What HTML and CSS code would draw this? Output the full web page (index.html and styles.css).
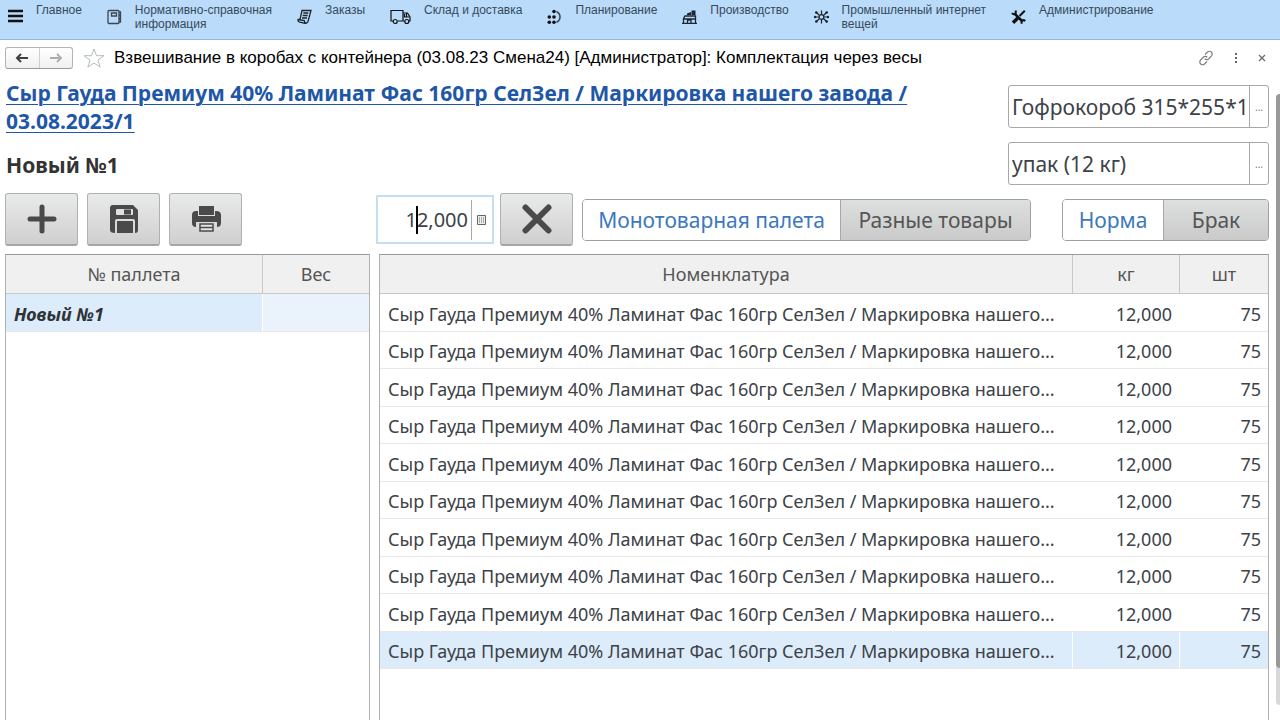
FILE: index.html
```html
<!DOCTYPE html>
<html lang="ru">
<head>
<meta charset="utf-8">
<title>Комплектация через весы</title>
<link rel="stylesheet" href="styles.css">
</head>
<body>
<nav class="menu">
  <a class="menu-item" href="#"><svg width="15" height="14" viewBox="0 0 15 14"><path d="M0 2h15M0 7h15M0 12h15" stroke="#111" stroke-width="2.6"/></svg><span>Главное</span></a>
  <a class="menu-item" href="#"><svg width="15" height="16" viewBox="0 0 15 16" fill="none" stroke="#3a4653" stroke-width="1.3"><rect x="1" y="1.5" width="11" height="13" rx="1"/><path d="M4.500 4h5v3h-5zM12 3h1.500v3H12M12 6.500h1.500v3H12M12 10h1.500v3H12"/></svg><span>Нормативно-справочная<br>информация</span></a>
  <a class="menu-item" href="#"><svg width="15" height="16" viewBox="0 0 15 16" fill="none" stroke="#1c242c" stroke-width="1.3"><path d="M5 1.500h9L11 12.500q-1 2-3 1.800l-6-1.500q-1.500-.8-.8-2.500H3zM1.200 10.500l6 1q.3 2 1.500 2.500"/><path d="M6.300 4h5M5.700 6.500h5M5 9h5" stroke-width="1.500"/></svg><span>Заказы</span></a>
  <a class="menu-item" href="#"><svg width="21" height="16" viewBox="0 0 21 16" fill="none" stroke="#111" stroke-width="1.2"><path d="M3 12H1V1.500h12V12H7.500M13 4h4.500l2.500 4v4h-1M13 12h1.500M14.500 5v3H19M16.500 4v4"/><circle cx="5.200" cy="12.500" r="2"/><circle cx="16.800" cy="12.500" r="2"/></svg><span>Склад и доставка</span></a>
  <a class="menu-item" href="#"><svg width="15" height="16" viewBox="0 0 15 16" fill="#111"><circle cx="7" cy="2.500" r="1.800"/><circle cx="2.300" cy="8" r="1.800"/><circle cx="7" cy="8" r="1.800"/><circle cx="2.300" cy="13.300" r="1.800"/><circle cx="7" cy="13.300" r="1.800"/><path d="M9.500 2.500q3.500 1.800 3.500 5.500t-3.500 5.300" fill="none" stroke="#34465a" stroke-width="1.500"/></svg><span>Планирование</span></a>
  <a class="menu-item" href="#"><svg width="15" height="16" viewBox="0 0 15 16" fill="none" stroke="#1c2630" stroke-width="1.300"><path d="M1.500 14V9.500L3 7h10.500v7M1.500 10h12M5.500 14v-3h3.500v3M0 14.300h15"/><path d="M5 4.500l4-1.500v3H5zM9.500 1.500h4V6h-4z" fill="#1c2630" stroke="none"/></svg><span>Производство</span></a>
  <a class="menu-item" href="#"><svg width="15" height="16" viewBox="0 0 15 16" fill="#18222c" stroke="#18222c" stroke-width="1.200"><path d="M7.500 1.500v4M7.500 10.500v4M1 8h4M10 8h4M2.500 3.500l3 3M12.500 3.500l-3 3M2.500 12.500l3-3M12.500 12.500l-3-3"/><circle cx="7.500" cy="8" r="2.300" fill="none"/><circle cx="2.300" cy="3.500" r=".7"/><circle cx="12.700" cy="3.500" r=".7"/><circle cx="2.300" cy="12.500" r=".7"/><circle cx="12.700" cy="12.500" r=".7"/><circle cx="1" cy="8" r=".6"/><circle cx="14" cy="8" r=".6"/></svg><span>Промышленный интернет<br>вещей</span></a>
  <a class="menu-item" href="#"><svg width="15" height="16" viewBox="0 0 15 16" fill="none" stroke="#111"><path d="M3.500 4.500l8 8" stroke-width="2.600"/><path d="M1 4q1.200 1.800 2.800 1T4.500 1.500M14.200 12q-1.500-1.500-2.800-.5t-.6 3.300" stroke-width="2"/><path d="M13.800 1.800L8.500 7" stroke-width="2"/><path d="M7 8.800l-5 5" stroke-width="3.400"/></svg><span>Администрирование</span></a>
</nav>

<header class="titlebar">
  <div class="history">
    <button aria-label="Назад"><svg width="14" height="10" viewBox="0 0 14 10"><path d="M13 5H2M6 1L2 5l4 4" fill="none" stroke="#404040" stroke-width="2"/></svg></button>
    <button aria-label="Вперёд"><svg width="14" height="10" viewBox="0 0 14 10"><path d="M1 5h11M8 1l4 4-4 4" fill="none" stroke="#acacac" stroke-width="1.800"/></svg></button>
  </div>
  <button class="plain star" aria-label="В избранное"><svg width="22" height="20" viewBox="0 0 22 20"><path d="M11 1l2.500 6.700H21l-6 4.400 2.200 7L11 15l-6.200 4.100 2.200-7-6-4.400h7.500z" fill="none" stroke="#b4bac0"/></svg></button>
  <h1>Взвешивание в коробах с контейнера (03.08.23 Смена24) [Администратор]: Комплектация через весы</h1>
  <div class="window-tools">
    <button class="plain" aria-label="Ссылка"><svg width="16" height="16" viewBox="0 0 16 16" fill="none" stroke="#7c7c7c" stroke-width="1.200"><path d="M7 4.500l2.500-2.500q2-1.500 3.800 0 1.700 2 .2 3.800L10.500 9Q8.500 10.500 6.700 8.800M9 11.500L6.500 14q-2 1.500-3.800 0-1.700-2-.2-3.800L5.500 7Q7.500 5.500 9.300 7.200"/></svg></button>
    <button class="plain" aria-label="Ещё"><svg width="4" height="12" viewBox="0 0 4 12" fill="#666"><path d="M1 1h2v2H1zM1 5h2v2H1zM1 9h2v2H1z"/></svg></button>
    <button class="plain" aria-label="Закрыть"><svg width="8" height="8" viewBox="0 0 8 8"><path d="M1 1l6 6M7 1L1 7" stroke="#666" stroke-width="1.200"/></svg></button>
  </div>
</header>

<main class="content">
  <section class="summary">
    <div class="product">
      <a href="#">Сыр Гауда Премиум 40% Ламинат Фас 160гр СелЗел / Маркировка нашего завода / 03.08.2023/1</a>
      <h2>Новый №1</h2>
    </div>
    <div class="packing">
      <div class="picker"><input aria-label="Короб" value="Гофрокороб 315*255*100"><button aria-label="Выбрать короб">...</button></div>
      <div class="picker"><input aria-label="Упаковка" value="упак (12 кг)"><button aria-label="Выбрать упаковку">...</button></div>
    </div>
  </section>

  <section class="toolbar">
    <div class="actions">
      <button class="tool" aria-label="Добавить"><svg width="30" height="30" viewBox="0 0 30 30"><path d="M15 3v24M3 15h24" stroke="#4a4a4a" stroke-width="5" stroke-linecap="round"/></svg></button>
      <button class="tool" aria-label="Сохранить"><svg width="30" height="30" viewBox="0 0 30 30"><path d="M4 1h20l5 5v20q0 3-3 3V17q0-2-2-2H8q-2 0-2 2v12q-5 0-5-3V4q0-3 3-3z" fill="#4a4a4a"/><rect x="7" y="5" width="17" height="6" rx="1" fill="#e0e0e0"/><path d="M15 5.500h7v5h-7zM8 17h16v12H8z" fill="#4a4a4a"/></svg></button>
      <button class="tool" aria-label="Печать"><svg width="30" height="30" viewBox="0 0 30 30"><path d="M8 2h15v9H8zM5 7h2v5h17V7h1q5 0 5 4v8q0 4-4 4v-5H5v5q-4 0-4-4v-8q0-4 4-4z" fill="#4a4a4a"/><path d="M9 20h13v7H9zM9 23.500h13" fill="#e5e5e5" stroke="#4a4a4a" stroke-width="1.500"/></svg></button>
    </div>
    <div class="weigh">
      <div class="weight"><input aria-label="Вес" value="12,000"><span class="caret"></span><button aria-label="Калькулятор"><svg width="9" height="10" viewBox="0 0 9 10"><path d="M.5.500h8v9h-8z" fill="#eee" stroke="#666"/><path d="M2 3h5M2 5h5M2 7h5" stroke="#666" stroke-dasharray="1 1"/></svg></button></div>
      <button class="tool" aria-label="Очистить"><svg width="30" height="30" viewBox="0 0 30 30"><path d="M3.500 3.500l23 23M26.500 3.500l-23 23" stroke="#4a4a4a" stroke-width="6" stroke-linecap="round"/></svg></button>
      <div class="switch pallet-kind"><button class="on">Монотоварная палета</button><button>Разные товары</button></div>
      <div class="switch quality"><button class="on">Норма</button><button>Брак</button></div>
    </div>
  </section>

  <section class="tables">
    <div class="pane pallets">
      <table>
        <colgroup><col><col class="col-weight"></colgroup>
        <thead><tr><th>№ паллета</th><th>Вес</th></tr></thead>
        <tbody><tr class="selected"><td>Новый №1</td><td></td></tr></tbody>
      </table>
    </div>
    <div class="pane goods">
      <table>
        <colgroup><col><col class="col-kg"><col class="col-pcs"></colgroup>
        <thead><tr><th>Номенклатура</th><th>кг</th><th>шт</th></tr></thead>
        <tbody>
          <tr><td>Сыр Гауда Премиум 40% Ламинат Фас 160гр СелЗел / Маркировка нашего...</td><td>12,000</td><td>75</td></tr>
          <tr><td>Сыр Гауда Премиум 40% Ламинат Фас 160гр СелЗел / Маркировка нашего...</td><td>12,000</td><td>75</td></tr>
          <tr><td>Сыр Гауда Премиум 40% Ламинат Фас 160гр СелЗел / Маркировка нашего...</td><td>12,000</td><td>75</td></tr>
          <tr><td>Сыр Гауда Премиум 40% Ламинат Фас 160гр СелЗел / Маркировка нашего...</td><td>12,000</td><td>75</td></tr>
          <tr><td>Сыр Гауда Премиум 40% Ламинат Фас 160гр СелЗел / Маркировка нашего...</td><td>12,000</td><td>75</td></tr>
          <tr><td>Сыр Гауда Премиум 40% Ламинат Фас 160гр СелЗел / Маркировка нашего...</td><td>12,000</td><td>75</td></tr>
          <tr><td>Сыр Гауда Премиум 40% Ламинат Фас 160гр СелЗел / Маркировка нашего...</td><td>12,000</td><td>75</td></tr>
          <tr><td>Сыр Гауда Премиум 40% Ламинат Фас 160гр СелЗел / Маркировка нашего...</td><td>12,000</td><td>75</td></tr>
          <tr><td>Сыр Гауда Премиум 40% Ламинат Фас 160гр СелЗел / Маркировка нашего...</td><td>12,000</td><td>75</td></tr>
          <tr class="selected"><td>Сыр Гауда Премиум 40% Ламинат Фас 160гр СелЗел / Маркировка нашего...</td><td>12,000</td><td>75</td></tr>
        </tbody>
      </table>
    </div>
  </section>
  <div class="scrollbar"><div class="thumb"></div></div>
</main>
</body>
</html>
```
FILE: styles.css
```css
* { box-sizing: border-box; }

body {
  margin: 0;
  height: 100vh;
  display: flex;
  flex-direction: column;
  overflow: hidden;
  background: #fff;
  color: #3c4248;
  font-family: "Noto Sans", "Open Sans", sans-serif;
  font-size: 18px;
}

button, input { font: inherit; color: inherit; margin: 0; }
button { padding: 0; display: flex; align-items: center; justify-content: center; }
svg { flex: none; display: block; }

.menu {
  flex: none;
  display: flex;
  gap: 25px;
  height: 40px;
  padding: 3px 8px 0;
  background: #badbf9;
  border-bottom: 1px solid #93b8d8;
  font-family: "Liberation Sans", Arial, sans-serif;
  font-size: 12px;
  line-height: 14px;
}
.menu-item { display: flex; gap: 13px; color: #36495c; text-decoration: none; white-space: nowrap; }
.menu-item svg { margin-top: 6px; }

.titlebar {
  flex: none;
  display: flex;
  align-items: center;
  height: 36px;
  padding: 0 14px 0 5px;
  font-family: "Liberation Sans", Arial, sans-serif;
  color: #000;
}
.titlebar h1 { flex: 1; margin: 0 0 0 9px; font-size: 17px; font-weight: 400; white-space: nowrap; }
.history {
  display: flex;
  width: 68px;
  height: 22px;
  border: 1px solid #b4b4b4;
  border-bottom-color: #999;
  border-radius: 3px;
  background: linear-gradient(#fff, #f0f0f0);
}
.history button { flex: 1; border: 0; background: none; }
.history button + button { border-left: 1px solid #d0d0d0; }
.plain { border: 0; background: none; }
.star { margin-left: 10px; }
.window-tools { display: flex; align-items: center; gap: 20px; }

.content {
  position: relative;
  flex: 1;
  min-height: 0;
  display: flex;
  flex-direction: column;
  padding: 3px 11px 0 5px;
}

.summary { display: flex; justify-content: space-between; gap: 60px; }
.product { flex: 1; padding-left: 1px; font-weight: 700; font-size: 21px; line-height: 28px; }
.product a { color: #1f57a8; text-decoration-thickness: 1px; text-underline-offset: 3px; }
.product h2 { margin: 16px 0 0; font-size: inherit; color: #333; }
.packing { flex: none; width: 261px; display: flex; flex-direction: column; gap: 14px; padding-top: 6px; }
.picker { display: flex; height: 43px; border: 1px solid #a8a8a8; border-radius: 3px; font-size: 21px; }
.picker input { flex: 1; min-width: 0; border: 0; padding: 0; margin: 0 3px; background: none; outline: 0; }
.picker button { flex: none; width: 19px; border: 0; border-left: 1px solid #a8a8a8; background: none; font-size: 10px; color: #777; }

.toolbar { display: flex; margin-top: 8px; height: 53px; font-size: 20px; }
.actions { width: 371px; display: flex; gap: 9px; }
.tool {
  width: 73px;
  height: 53px;
  border: 1px solid #b0b0b0;
  border-bottom: 2px solid #a6a6a6;
  border-radius: 3px;
  background: linear-gradient(#e9eaea, #cfcfcf);
}
.weigh { flex: 1; display: flex; align-items: center; }
.weight { position: relative; display: flex; align-items: center; width: 118px; height: 49px; margin-right: 6px; border: 2px solid #c4dff3; }
.weight input { flex: 1; min-width: 0; height: 40px; padding: 0 3px 0 0; border: 0; border-right: 1px solid #aaa; outline: 0; text-align: right; }
.weight button { width: 18px; padding-right: 2px; border: 0; background: none; }
.weight button { width: 20px; }
.caret { position: absolute; left: 38px; top: 9px; width: 2px; height: 28px; background: #000; }
.switch { display: flex; height: 42px; border: 1px solid #a0a0a0; border-radius: 4px; overflow: hidden; font-size: 21px; }
.switch button { flex: 1; border: 0; background: linear-gradient(#dedfdf, #cacaca); color: #555; white-space: nowrap; }
.switch button + button { border-left: 1px solid #a8a8a8; }
.switch .on { background: #fff; color: #3b78bd; }
.pallet-kind { width: 449px; margin-left: 9px; }
.pallet-kind .on { flex: none; width: 257px; }
.quality { width: 207px; margin-left: auto; }
.quality .on { flex: none; width: 100px; }

.tables { flex: 1; min-height: 0; display: flex; gap: 9px; margin-top: 8px; }
.pane { border: 1px solid #b0b0b0; border-top-color: #999; border-bottom: 0; overflow: hidden; }
.pallets { flex: none; width: 365px; }
.goods { flex: 1; min-width: 0; }
table { width: 100%; table-layout: fixed; border-collapse: separate; border-spacing: 0; }
.col-weight { width: 107px; }
.col-kg { width: 107px; }
.col-pcs { width: 89px; }
th { height: 39px; padding: 0; background: #f0f0f0; border-bottom: 1px solid #c8c8c8; color: #555; font-weight: 400; }
th + th { border-left: 1px solid #c8c8c8; }
td { height: 38px; padding: 2px 7px 0 8px; border-bottom: 1px solid #e8e8e8; text-align: right; white-space: nowrap; line-height: 24px; }
tr:nth-child(even) td { height: 37px; }
td:first-child { padding-right: 0; text-align: left; }
.selected td { background: #dcecfa; }
.selected td + td { border-left: 1px solid #fff; }
.pallets .selected td { font-weight: 700; font-style: italic; color: #2e3338; }
.pallets .selected td + td { background: #eaf3fc; }

.scrollbar { position: absolute; right: 0; top: 18px; bottom: 15px; width: 4px; background: #d8d8d8; border-radius: 4px 0 0 4px; }
.thumb { height: 94%; background: #999; border-radius: 4px 0 0 4px; }
```
